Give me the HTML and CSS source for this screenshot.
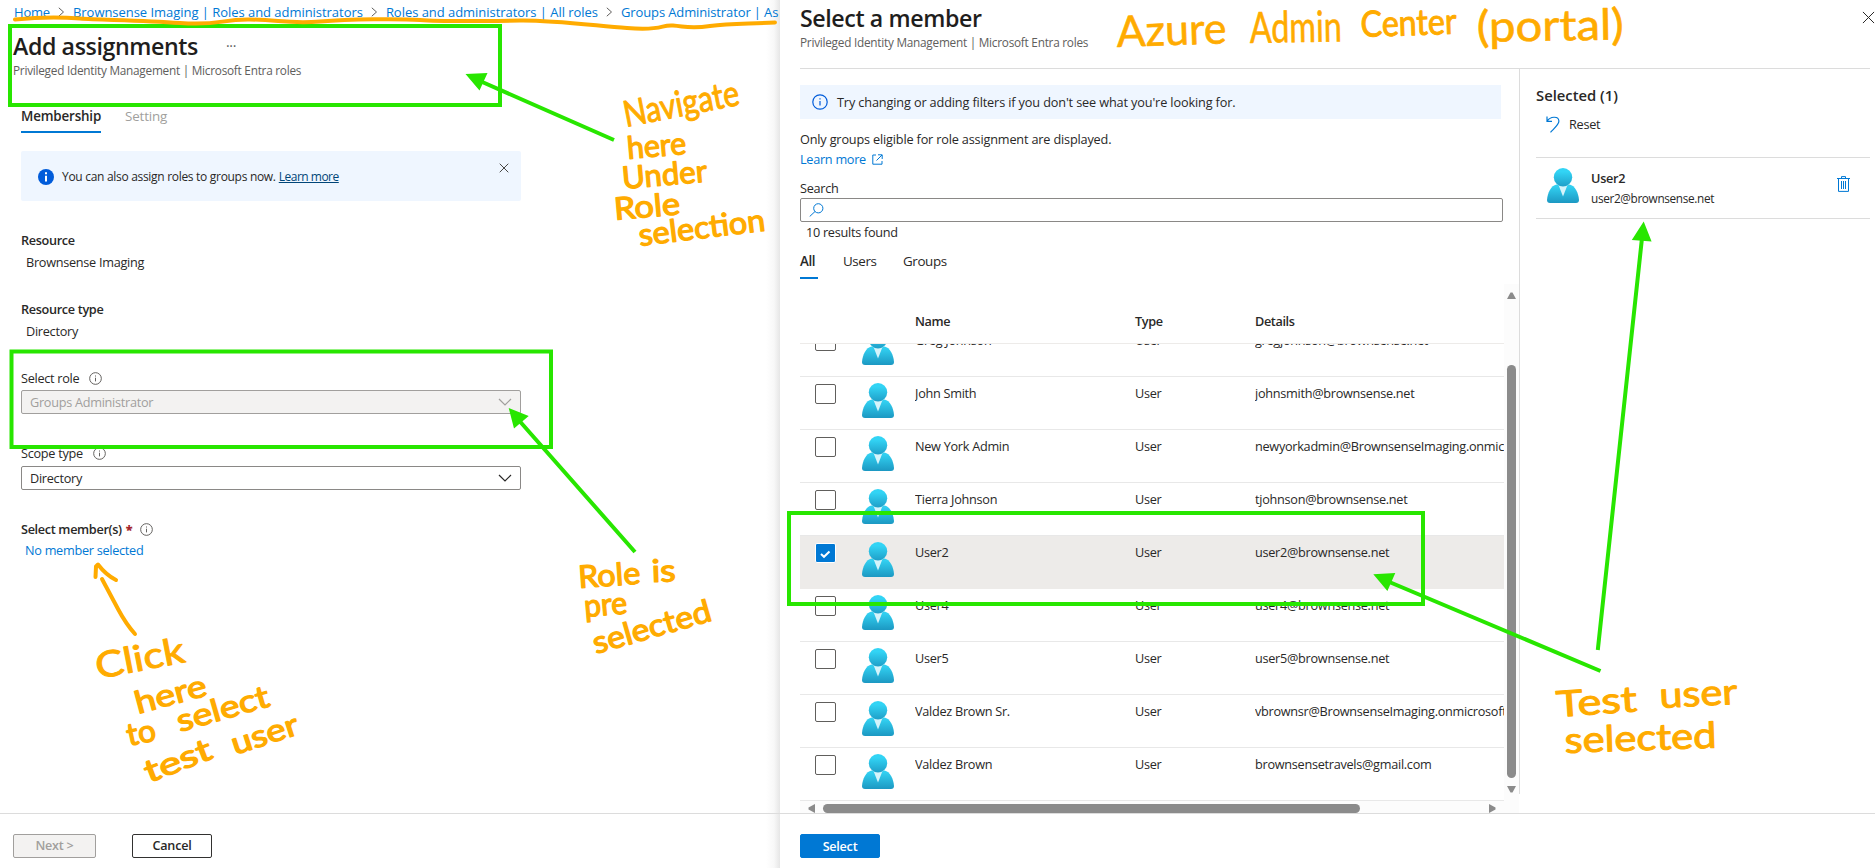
FILE: index.html
```html
<!DOCTYPE html>
<html lang="en">
<head>
<meta charset="utf-8">
<title>Add assignments</title>
<link rel="stylesheet" href="styles.css">
</head>
<body>
<svg class="defs" width="0" height="0">
  <defs>
    <linearGradient id="g-head" x1="0" y1="0" x2="0" y2="1"><stop offset="0.2" stop-color="#32d4f5"/><stop offset="1" stop-color="#1f9fc8"/></linearGradient>
    <linearGradient id="g-body" x1="0" y1="0" x2="0" y2="1"><stop offset="0.1" stop-color="#32d0f1"/><stop offset="1" stop-color="#1c98c2"/></linearGradient>
    <symbol id="avatar" viewBox="0 0 32 35">
      <path d="M3 35Q0 35 0 32C0.5 25 4 17.5 9.5 16.500H22.500C28 17.500 31.500 25 32 32Q32 35 29 35Z" fill="url(#g-body)"/>
      <path d="M11.500 17L16 28.500L20.500 17Z" fill="#d5f4fb"/>
      <circle cx="16" cy="9.200" r="9.200" fill="url(#g-head)"/>
    </symbol>
    <symbol id="info" viewBox="0 0 16 16">
      <circle cx="8" cy="8" r="7.200" fill="none" stroke="currentColor" stroke-width="1.200"/>
      <path d="M8 7V11.500M8 4.300V5.600" stroke="currentColor" stroke-width="1.200"/>
    </symbol>
    <symbol id="chev" viewBox="0 0 14 8"><path d="M1 1L7 7L13 1" fill="none" stroke="currentColor" stroke-width="1.200"/></symbol>
    <symbol id="sep" viewBox="0 0 7 10"><path d="M0.800 0.800L5.500 5L0.800 9.200" fill="none" stroke="#605e5c"/></symbol>
    <symbol id="cross" viewBox="0 0 14 14"><path d="M1 1L13 13M13 1L1 13" fill="none" stroke="currentColor" vector-effect="non-scaling-stroke"/></symbol>
  </defs>
</svg>

<div class="portal">
  <main class="blade">
    <nav class="crumbs">
      <a class="home">Home</a><svg width="7" height="10"><use href="#sep"/></svg>
      <a>Brownsense Imaging | Roles and administrators</a><svg width="7" height="10"><use href="#sep"/></svg>
      <a>Roles and administrators | All roles</a><svg width="7" height="10"><use href="#sep"/></svg>
      <a class="last">Groups Administrator | As</a>
    </nav>
    <div class="heading"><h1>Add assignments</h1><span class="more">···</span></div>
    <p class="sub">Privileged Identity Management | Microsoft Entra roles</p>
    <div class="tabs main-tabs"><span class="tab on">Membership</span><span class="tab off">Setting</span></div>

    <div class="notice">
      <svg class="notice-icon" width="16" height="16" viewBox="0 0 16 16"><circle cx="8" cy="8" r="8" fill="#015cda"/><path d="M8 6.800V12.500M8 3.300V5.300" stroke="#fff" stroke-width="2"/></svg>
      <span class="n1">You can also assign roles to groups now.</span><a class="n2">Learn more</a>
      <svg class="notice-close" width="10" height="10"><use href="#cross"/></svg>
    </div>

    <div class="field ro first"><div class="label strong">Resource</div><div class="value">Brownsense Imaging</div></div>
    <div class="field ro"><div class="label strong">Resource type</div><div class="value">Directory</div></div>
    <div class="field role">
      <div class="label"><span>Select role</span><svg class="i" width="13" height="13"><use href="#info"/></svg></div>
      <div class="select disabled"><span>Groups Administrator</span><svg width="14" height="8"><use href="#chev"/></svg></div>
    </div>
    <div class="field scope">
      <div class="label"><span>Scope type</span><svg class="i" width="13" height="13"><use href="#info"/></svg></div>
      <div class="select"><span>Directory</span><svg width="14" height="8"><use href="#chev"/></svg></div>
    </div>
    <div class="field members">
      <div class="label strong"><span>Select member(s)</span><b class="req">*</b><svg class="i" width="13" height="13"><use href="#info"/></svg></div>
      <a class="nomember">No member selected</a>
    </div>
    <footer class="foot"><button class="btn next">Next &gt;</button><button class="btn cancel">Cancel</button></footer>
  </main>

  <aside class="panel">
    <header class="panel-head">
      <div><h1>Select a member</h1>
      <p class="sub">Privileged Identity Management | Microsoft Entra roles</p></div>
      <svg class="panel-close" width="13" height="13"><use href="#cross"/></svg>
    </header>
    <div class="panel-main">
      <section class="picker">
        <div class="tip"><svg width="16" height="16"><use href="#info"/></svg><span>Try changing or adding filters if you don't see what you're looking for.</span></div>
        <p class="only">Only groups eligible for role assignment are displayed.</p>
        <p class="learn"><a>Learn more</a><svg width="11" height="11" viewBox="0 0 11 11" fill="none" stroke="#0078d4"><path d="M4 1H0.800V10.200H10V7M6 0.800H10.200V5M10 1L4.500 6.500"/></svg></p>
        <label class="slabel">Search</label>
        <div class="search"><svg width="15" height="14" viewBox="0 0 15 14" fill="none" stroke="#0078d4"><circle cx="9.300" cy="5.300" r="4.600"/><path d="M6 8.500L0.700 13.500"/></svg></div>
        <p class="count">10 results found</p>
        <div class="tabs list-tabs"><span class="tab on all">All</span><span class="tab users">Users</span><span class="tab">Groups</span></div>
        <div class="grid-wrap">
          <div class="grid">
            <div class="thead"><span></span><span></span><span>Name</span><span>Type</span><span>Details</span></div>
            <div class="rows">
              <div class="row"><i class="box"></i><svg width="32" height="35"><use href="#avatar"/></svg><span>Greg Johnson</span><span>User</span><span>gregjohnson@brownsense.net</span></div>
              <div class="row"><i class="box"></i><svg width="32" height="35"><use href="#avatar"/></svg><span>John Smith</span><span>User</span><span>johnsmith@brownsense.net</span></div>
              <div class="row"><i class="box"></i><svg width="32" height="35"><use href="#avatar"/></svg><span>New York Admin</span><span>User</span><span>newyorkadmin@BrownsenseImaging.onmicrosoft.com</span></div>
              <div class="row"><i class="box"></i><svg width="32" height="35"><use href="#avatar"/></svg><span>Tierra Johnson</span><span>User</span><span>tjohnson@brownsense.net</span></div>
              <div class="row sel"><i class="box"><svg width="19" height="19" viewBox="0 0 19 19"><path d="M5 10L8 12.800L13.500 7.500" fill="none" stroke="#fff" stroke-width="2"/></svg></i><svg width="32" height="35"><use href="#avatar"/></svg><span>User2</span><span>User</span><span>user2@brownsense.net</span></div>
              <div class="row"><i class="box"></i><svg width="32" height="35"><use href="#avatar"/></svg><span>User4</span><span>User</span><span>user4@brownsense.net</span></div>
              <div class="row"><i class="box"></i><svg width="32" height="35"><use href="#avatar"/></svg><span>User5</span><span>User</span><span>user5@brownsense.net</span></div>
              <div class="row"><i class="box"></i><svg width="32" height="35"><use href="#avatar"/></svg><span>Valdez Brown Sr.</span><span>User</span><span>vbrownsr@BrownsenseImaging.onmicrosoft.com</span></div>
              <div class="row"><i class="box"></i><svg width="32" height="35"><use href="#avatar"/></svg><span>Valdez Brown</span><span>User</span><span>brownsensetravels@gmail.com</span></div>
            </div>
            <div class="hbar"><svg width="7" height="9"><path d="M7 0V9L0.500 5.500V3.500Z" fill="#8b8b8b"/></svg><i></i><svg width="7" height="9"><path d="M0 0V9L6.500 5.500V3.500Z" fill="#8b8b8b"/></svg></div>
          </div>
          <div class="vbar"><svg width="9" height="7"><path d="M0 7H9L5.500 0.500H3.500Z" fill="#8b8b8b"/></svg><i></i><svg width="9" height="7"><path d="M0 0H9L5.500 6.500H3.500Z" fill="#8b8b8b"/></svg></div>
        </div>
      </section>
      <section class="chosen">
        <h2>Selected (1)</h2>
        <a class="reset"><svg width="14" height="17" viewBox="0 0 14 17" fill="none" stroke="#0078d4" stroke-width="1.200"><path d="M1 0.500V5.300H6M1.300 5C4 0.500 12.500 -0.500 12.900 5C13 8.500 8.500 12 4.500 16.300"/></svg><span>Reset</span></a>
        <div class="person"><svg width="32" height="35"><use href="#avatar"/></svg>
          <div class="who"><b>User2</b><small>user2@brownsense.net</small></div>
          <svg class="trash" width="13" height="16" viewBox="0 0 13 16" fill="none" stroke="#0078d4"><path d="M0 2.500H13M4.500 2V0.600H8.500V2M1.500 2.500V15.400H11.500V2.500M4.500 5V13M6.500 5V13M8.500 5V13"/></svg>
        </div>
      </section>
    </div>
    <footer class="foot pfoot"><button class="btn primary">Select</button></footer>
  </aside>

  <svg class="marks" width="1875" height="868" viewBox="0 0 1875 868">
    <g fill="none" stroke="#28e600" stroke-width="4">
      <rect x="10" y="26" width="490" height="79"/>
      <rect x="11.500" y="351.500" width="539.500" height="95.500"/>
      <rect x="789" y="513" width="634" height="91"/>
      <path d="M480 81L614 140M516 417L635 552M1387 581L1600.500 671M1642 238L1597.800 650"/>
    </g>
    <path fill="#28e600" d="M465.500 74L487.500 73L479.500 90.500ZM508.700 408L528.700 416L514 428.500ZM1373.300 574.300L1395.300 573L1387.400 591ZM1643.700 221.500L1631.800 240L1651.600 241.500Z"/>
    <g fill="none" stroke="#ffab00" stroke-width="4" stroke-linecap="round" stroke-linejoin="round">
      <path d="M15 19.500C40 17 60 17 80 18.500S140 20 180 23S220 19 250 19.500S290 24 320 21.500S400 18.500 420 20S490 21 520 20.500S590 25 627 28S660 24.500 673 25.500S690 29 710 26S750 24 775 22.500"/>
      <path d="M95.500 577L96 566.500L98 564.500Q106 575 116 580M102 579L118 609Q126 624 135 634"/>
    </g>
    <g class="ink">
      <text class="xl" transform="translate(1117 47) rotate(-2)" textLength="110" lengthAdjust="spacingAndGlyphs">Azure</text>
      <text class="xl" transform="translate(1250 43) rotate(-1)" textLength="92" lengthAdjust="spacingAndGlyphs">Admin</text>
      <text class="lg" transform="translate(1361 37) rotate(-2)" textLength="96" lengthAdjust="spacingAndGlyphs">Center</text>
      <text class="xl" transform="translate(1477 42) rotate(-1)" textLength="147" lengthAdjust="spacingAndGlyphs">(portal)</text>
      <text class="lg" transform="translate(626 127) rotate(-11)" textLength="117" lengthAdjust="spacingAndGlyphs">Navigate</text>
      <text transform="translate(628 159) rotate(-5)" textLength="59" lengthAdjust="spacingAndGlyphs">here</text>
      <text transform="translate(623 189) rotate(-5)" textLength="85" lengthAdjust="spacingAndGlyphs">Under</text>
      <text transform="translate(615 220) rotate(-5)" textLength="66" lengthAdjust="spacingAndGlyphs">Role</text>
      <text transform="translate(640 246) rotate(-7)" textLength="127" lengthAdjust="spacingAndGlyphs">selection</text>
      <text transform="translate(579 588) rotate(-4)" textLength="62" lengthAdjust="spacingAndGlyphs">Role</text>
      <text transform="translate(652 582) rotate(-2)" textLength="24" lengthAdjust="spacingAndGlyphs">is</text>
      <text transform="translate(585 617) rotate(-5)" textLength="43" lengthAdjust="spacingAndGlyphs">pre</text>
      <text transform="translate(596 654) rotate(-16)" textLength="122" lengthAdjust="spacingAndGlyphs">selected</text>
      <text class="lg" transform="translate(98 679) rotate(-11)" textLength="90" lengthAdjust="spacingAndGlyphs">Click</text>
      <text transform="translate(138 714) rotate(-15)" textLength="73" lengthAdjust="spacingAndGlyphs">here</text>
      <text transform="translate(129 746) rotate(-12)" textLength="29" lengthAdjust="spacingAndGlyphs">to</text>
      <text transform="translate(180 732) rotate(-16)" textLength="95" lengthAdjust="spacingAndGlyphs">select</text>
      <text transform="translate(149 783) rotate(-21)" textLength="70" lengthAdjust="spacingAndGlyphs">test</text>
      <text transform="translate(235 755) rotate(-18)" textLength="69" lengthAdjust="spacingAndGlyphs">user</text>
      <text class="lg" transform="translate(1557 717) rotate(-4)" textLength="81" lengthAdjust="spacingAndGlyphs">Test</text>
      <text class="lg" transform="translate(1660 708) rotate(-3)" textLength="78" lengthAdjust="spacingAndGlyphs">user</text>
      <text class="lg" transform="translate(1565 753) rotate(-2)" textLength="152" lengthAdjust="spacingAndGlyphs">selected</text>
    </g>
  </svg>
</div>
</body>
</html>
```
FILE: styles.css
```css
* { box-sizing: border-box; }
body { margin: 0; background: #fff; color: #292827; font: 12.7px/20px "Open Sans", "Noto Sans", sans-serif; letter-spacing: -0.28px; overflow: hidden; }
p, h1, h2 { margin: 0; }
i { font-style: normal; }
a { color: #0078d4; }
.defs { position: absolute; }
.portal { position: relative; display: flex; width: 1875px; height: 868px; overflow: hidden; }
.blade { position: relative; width: 780px; height: 868px; display: flex; flex-direction: column; overflow: hidden; white-space: nowrap; background: linear-gradient(to right, #fff 766px, #f8f8f8 774px, #e6e6e6 780px); }

.crumbs { display: flex; align-items: center; height: 22px; padding: 2px 0 0 14px; gap: 8px; font-size: 13px; letter-spacing: -0.04px; }
.crumbs svg, .crumbs a { flex: none; }
.crumbs .home { letter-spacing: -0.19px; }
.crumbs .last { letter-spacing: -0.12px; }
.heading { display: flex; align-items: center; height: 36px; margin-top: 6px; padding-left: 13px; }
h1 { font-size: 23.2px; line-height: 36px; font-weight: 600; color: #1f1e1d; letter-spacing: -0.4px; }
.more { margin-left: 28px; font-size: 14px; color: #605e5c; }
.sub { font-size: 11.8px; letter-spacing: -0.25px; line-height: 18px; color: #605e5c; padding-left: 13px; margin-top: -3px; }
.tabs { display: flex; font-size: 13.4px; letter-spacing: -0.17px; }
.tab { line-height: 20px; height: 27px; }
.on { font-weight: 600; border-bottom: 2px solid #0078d4; }
.off { color: #a19f9d; }
.main-tabs { padding-left: 21px; gap: 24px; margin-top: 27px; }
.notice { position: relative; display: flex; align-items: center; width: 500px; height: 50px; margin: 18px 0 0 21px; padding: 1px 0 0 17px; background: #eff6ff; border-radius: 2px; font-size: 12px; letter-spacing: -0.3px; }
.n1 { margin: 0 3px 0 8px; }
.n2 { color: #004578; text-decoration: underline; letter-spacing: -0.5px; }
.notice-close { position: absolute; right: 12px; top: 12px; color: #484644; }

.field { padding-left: 21px; width: 521px; flex: none; }
.label { display: flex; align-items: center; height: 20px; }
.strong { font-weight: 600; letter-spacing: -0.34px; }
.value { padding: 2px 0 0 5px; }
.ro { height: 69px; }
.first { margin-top: 29px; }
.i { margin-left: 10px; color: #605e5c; }
.select { display: flex; align-items: center; justify-content: space-between; height: 24px; margin-top: 2px; border: 1px solid #8a8886; border-radius: 2px; padding: 0 8px; background: #fff; }
.disabled { background: #f3f2f1; color: #a19f9d; border-color: #a19f9d; }
.scope, .members { margin-top: 29px; }
.scope .select { margin-top: 3px; }
.members .i { margin-left: 8px; }
.nomember { display: block; padding: 1px 0 0 4px; }
.foot { position: absolute; left: 0; right: 0; bottom: 0; height: 55px; border-top: 1px solid #dcdcdc; display: flex; gap: 36px; padding: 20px 0 0 13px; }
.btn { height: 24px; border: 1px solid #323130; border-radius: 2px; background: #fff; font: 600 12.6px/20px "Open Sans", sans-serif; letter-spacing: -0.24px; padding: 0; color: #292827; }
.next { width: 83px; background: #f3f2f1; color: #a19f9d; border-color: #a19f9d; }
.cancel { width: 80px; }
.req { color: #a4262c; margin-left: 4px; }

.panel { position: relative; width: 1095px; height: 868px; display: flex; flex-direction: column; background: #fff; white-space: nowrap; padding-left: 20px; }
.panel-head { display: flex; justify-content: space-between; height: 69px; width: 1070px; border-bottom: 1px solid #dcdcdc; }
.panel-head .sub { padding: 0; }
.panel-close { margin: 11px -5px 0 0; }
.panel-main { display: flex; height: 725px; }
.picker { width: 720px; border-right: 1px solid #dcdcdc; padding-top: 16px; }
.tip { display: flex; align-items: center; gap: 9px; width: 701px; height: 34px; padding-left: 12px; background: #eff6ff; letter-spacing: -0.13px; }
.tip svg { color: #015cda; }
.search { height: 24px; width: 703px; border: 1px solid #8a8886; border-radius: 2px; padding: 4px 8px; display: flex; }
.only { margin-top: 10px; letter-spacing: -0.17px; }
.learn { display: flex; align-items: center; gap: 6px; }
.slabel { display: block; margin-top: 9px; }
.count { padding-left: 6px; }
.list-tabs { gap: 25px; margin-top: 9px; letter-spacing: -0.4px; }
.list-tabs .tab { height: 28px; }
.all { width: 18px; }
.users { width: 35px; }
.grid-wrap { display: flex; height: 529px; margin-top: 5px; }
.grid { width: 704px; overflow: hidden; }
.thead, .row { display: grid; grid-template-columns: 61.5px 53.5px 220px 120px 1fr; }
.thead { height: 60px; padding-top: 27px; font-weight: 600; border-bottom: 1px solid #edebe9; letter-spacing: -0.4px; }
.rows { height: 457px; overflow: hidden; display: flex; flex-direction: column; justify-content: flex-end; }
.row { flex: none; height: 53px; padding-top: 6px; border-bottom: 1px solid #e8e8e8; }
.row span { overflow: hidden; }
.box { width: 21px; height: 20px; margin: 1px 0 0 15px; border: 1px solid #605e5c; border-radius: 2px; background: #fff; }
.sel { background: #edebe9; border-color: #edebe9; }
.sel .box { background: #0078d4; border-color: #fff; }
.sel .box svg { display: block; }
.hbar { display: flex; align-items: flex-end; height: 12px; background: #fcfcfc; padding: 0 8px; }
.hbar i { width: 537px; height: 9px; border-radius: 5px; background: #8b8b8b; margin: 0 129px 0 8px; }
.vbar { width: 15px; height: 529px; background: #fcfcfc; display: flex; flex-direction: column; align-items: center; padding: 8px 0 0 0; }
.vbar i { width: 9px; height: 413px; border-radius: 5px; background: #8b8b8b; margin: 66px 0 8px; }
.chosen { padding: 15px 0 0 16px; width: 350px; }
h2 { font-size: 14.8px; line-height: 22px; font-weight: 600; letter-spacing: 0; }
.reset { display: flex; align-items: center; gap: 9px; height: 20px; margin: 8px 0 0 10px; color: #292827; }
.person { display: flex; border-top: 1px solid #dcdcdc; border-bottom: 1px solid #dcdcdc; height: 62px; margin-top: 23px; padding: 10px 0 0 11px; }
.who { display: flex; flex-direction: column; margin-left: 12px; }
.who b { font-weight: 600; }
.who small { font-size: 11.8px; letter-spacing: -0.35px; }
.trash { margin: 8px 20px 0 auto; }
.pfoot { padding-left: 20px; }
.primary { width: 80px; padding-top: 1px; background: #0078d4; border-color: #0078d4; color: #fff; }
.marks { position: absolute; left: 0; top: 0; }
.ink { font: 31px "Lato", sans-serif; letter-spacing: 0; fill: #ffab00; stroke: #ffab00; stroke-width: 1.300; stroke-linejoin: round; }
.ink .lg { font-size: 36px; stroke-width: 1; }
.ink .xl { font-size: 43px; stroke-width: 0.600; }
```
